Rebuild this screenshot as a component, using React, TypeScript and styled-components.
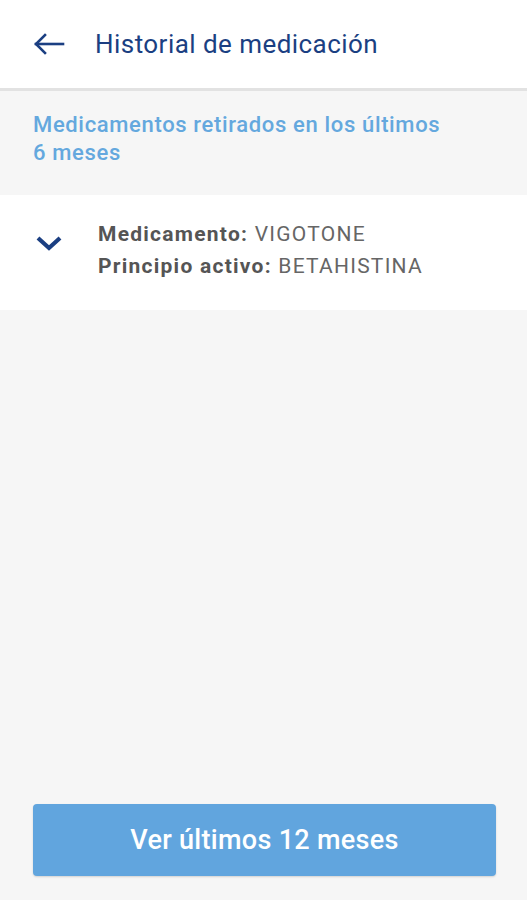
import styled, { createGlobalStyle } from "styled-components";

const GlobalStyle = createGlobalStyle`
  html, body {
    margin: 0;
    padding: 0;
    background: #f6f6f6;
  }
  body {
    font-family: Roboto, "Liberation Sans", sans-serif;
  }
`;

const Screen = styled.div`
  width: 527px;
  height: 900px;
  display: flex;
  flex-direction: column;
  background: #f6f6f6;
`;

const Header = styled.header`
  height: 88px;
  display: flex;
  align-items: center;
  padding-left: 33px;
  background: #fff;
  border-bottom: 3px solid #e2e2e2;
`;

const BackBtn = styled.button`
  width: 32px;
  height: 32px;
  padding: 0;
  border: none;
  background: none;
  display: flex;
  align-items: center;
  color: #1b3f82;
`;

const Title = styled.h1`
  margin: 0 0 0 30px;
  font-size: 26px;
  letter-spacing: 0.45px;
  font-weight: 400;
  color: #1b3f82;
`;

const SectionTitle = styled.h2`
  margin: 0;
  padding: 20px 33px 28px;
  font-size: 22px;
  letter-spacing: 0.65px;
  line-height: 28px;
  font-weight: 500;
  color: #64a8de;
`;

const Line = styled.span`
  display: block;
`;

const Card = styled.div`
  display: flex;
  align-items: flex-start;
  padding: 23px 0 28px 35px;
  background: #fff;
`;

const Chevron = styled.div`
  width: 28px;
  height: 20px;
  margin-top: 16px;
  color: #1b3f82;
`;

const Info = styled.div`
  margin-left: 35px;
  font-size: 21px;
  letter-spacing: 1.25px;
  line-height: 32px;
  color: #666;
`;

const Label = styled.span`
  font-weight: 700;
  color: #555;
`;

const Spacer = styled.div`
  flex: 1;
`;

const Footer = styled.div`
  padding: 0 31px 24px 33px;
`;

const MainButton = styled.button`
  width: 100%;
  height: 72px;
  border: none;
  border-radius: 4px;
  background: #61a5de;
  color: #fff;
  font-family: Roboto, "Liberation Sans", sans-serif;
  font-size: 27px;
  letter-spacing: 0.3px;
  font-weight: 500;
  box-shadow: 0 1px 2px rgba(0, 0, 0, 0.15);
`;

function App() {
  return (
    <>
      <GlobalStyle />
      <Screen>
        <Header>
          <BackBtn aria-label="Volver">
            <svg width="32" height="24" viewBox="0 0 32 24" fill="none" stroke="currentColor" strokeWidth="2.6" strokeLinecap="square">
              <path d="M3 12h27" />
              <path d="M12 3l-9 9 9 9" />
            </svg>
          </BackBtn>
          <Title>Historial de medicación</Title>
        </Header>
        <SectionTitle>
          <Line>Medicamentos retirados en los últimos</Line>
          <Line>6 meses</Line>
        </SectionTitle>
        <Card>
          <Chevron>
            <svg width="28" height="20" viewBox="0 0 28 20" fill="none" stroke="currentColor" strokeWidth="4.2" strokeLinejoin="miter">
              <path d="M3 4l11 10 11-10" />
            </svg>
          </Chevron>
          <Info>
            <div>
              <Label>Medicamento:</Label> VIGOTONE
            </div>
            <div>
              <Label>Principio activo:</Label> BETAHISTINA
            </div>
          </Info>
        </Card>
        <Spacer />
        <Footer>
          <MainButton>Ver últimos 12 meses</MainButton>
        </Footer>
      </Screen>
    </>
  );
}

export default App;
